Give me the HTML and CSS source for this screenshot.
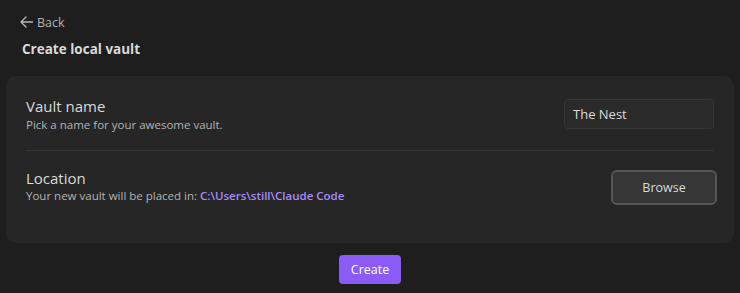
FILE: index.html
```html
<!DOCTYPE html>
<html>
<head>
<meta charset="utf-8">
<link rel="stylesheet" href="styles.css">
</head>
<body>
<div class="page">
  <div class="back">
    <svg class="back-icon" width="13" height="12" viewBox="0 0 13 12"><path d="M6 1 L1 6 L6 11 M1 6 H12.5" fill="none" stroke="#b8b8b8" stroke-width="1.3" stroke-linecap="round" stroke-linejoin="round"/></svg>
    <span>Back</span>
  </div>
  <h1 class="title">Create local vault</h1>
  <div class="card">
    <div class="row">
      <div class="info">
        <div class="name">Vault name</div>
        <div class="desc">Pick a name for your awesome vault.</div>
      </div>
      <div class="control"><input class="input" type="text" value="The Nest"></div>
    </div>
    <div class="row row-last">
      <div class="info">
        <div class="name">Location</div>
        <div class="desc">Your new vault will be placed in: <span class="path">C:\Users\still\Claude Code</span></div>
      </div>
      <div class="control"><button class="browse">Browse</button></div>
    </div>
  </div>
  <div class="actions"><button class="create">Create</button></div>
</div>
</body>
</html>
```
FILE: styles.css
```css
html, body { margin: 0; padding: 0; background: #1e1e1e; }
body { font-family: "Open Sans", "Noto Sans", sans-serif; color: #dadada; width: 740px; height: 293px; overflow: hidden; }
.page { padding: 12px 6px 0 6px; }
.back { display: flex; align-items: center; gap: 4px; margin-left: 14px; height: 20px; color: #b3b3b3; font-size: 12.5px; }
.back-icon { display: block; }
.title { margin: 7px 0 0 16px; font-size: 13.5px; font-weight: 700; color: #dadada; line-height: 20px; }
.card { margin-top: 17px; background: #262626; border-radius: 10px; padding: 4px 20px 19px 20px; height: 167px; box-sizing: border-box; }
.row { display: flex; justify-content: space-between; align-items: center; border-bottom: 1px solid #363636; height: 71px; box-sizing: border-box; padding-bottom: 2px; }
.row-last { border-bottom: none; height: 73px; padding-bottom: 3px; }
.name { font-size: 15px; color: #dadada; line-height: 20px; }
.desc { font-size: 11.5px; color: #b3b3b3; line-height: 16px; margin-top: 1px; }
.row-last .desc { margin-top: 0; }
.path { color: #a88bfa; font-weight: 600; }
.input { width: 150px; height: 30px; box-sizing: border-box; background: #2a2a2a; border: 1px solid #363636; border-radius: 4px; color: #dadada; font-family: inherit; font-size: 13px; padding: 0 8px; outline: none; }
.browse { width: 106px; height: 35px; margin-right: -3px; margin-top: 2px; background: #363636; border: 2px solid #555555; border-radius: 6px; color: #dadada; font-family: inherit; font-size: 12.5px; }
.actions { display: flex; justify-content: center; margin-top: 12px; }
.create { width: 62px; height: 29px; background: #8a5cf5; border: none; border-radius: 4px; color: #ffffff; font-family: inherit; font-size: 12.5px; }
```
